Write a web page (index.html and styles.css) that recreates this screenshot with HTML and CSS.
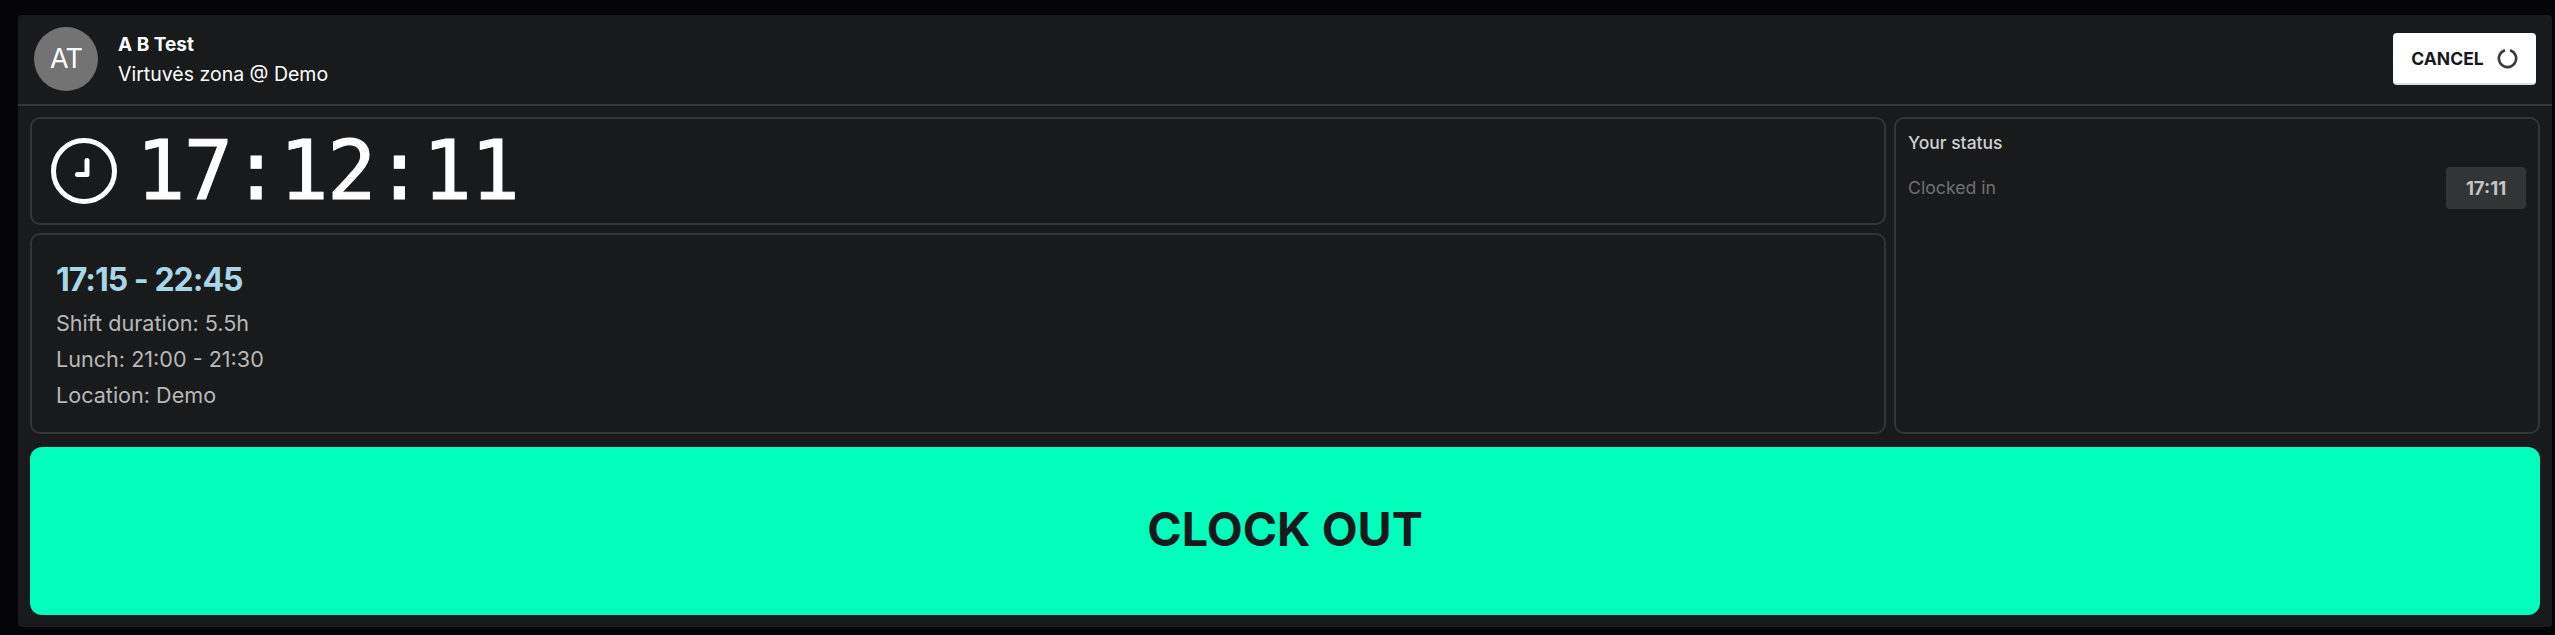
FILE: index.html
```html
<!DOCTYPE html>
<html lang="en">
<head>
  <meta charset="UTF-8">
  <title>Clock out</title>
  <meta name="viewport" content="width=device-width, initial-scale=1.0">
  <link rel="stylesheet" href="styles.css">
</head>
<body>
  <div class="panel">
    <header class="top">
      <div class="avatar">AT</div>
      <div class="who">
        <strong>A B Test</strong>
        <span>Virtuvės zona @ Demo</span>
      </div>
      <button class="cancel" type="button">
        CANCEL
        <svg class="spinner" viewBox="0 0 20 20" width="21" height="21">
          <path d="M12.4 2.1A8.2 8.2 0 1 1 7.6 2.1" fill="none" stroke="#3a3b3d" stroke-width="2.6"/>
        </svg>
      </button>
    </header>
    <div class="content">
      <div class="grid">
        <section class="card clock">
          <svg class="clock-icon" viewBox="0 0 66 66" width="66" height="66">
            <circle cx="33" cy="33" r="30.5" fill="none" stroke="#fff" stroke-width="5"/>
            <path d="M36 22.5V36.5H26.5" fill="none" stroke="#fff" stroke-width="5" stroke-linecap="round" stroke-linejoin="round"/>
          </svg>
          <div class="time">17:12:11</div>
        </section>
        <aside class="card status">
          <h3>Your status</h3>
          <div class="status-row">
            <span class="status-label">Clocked in</span>
            <b class="badge">17:11</b>
          </div>
        </aside>
        <section class="card shift">
          <h2>17:15 - 22:45</h2>
          <p>Shift duration: 5.5h</p>
          <p>Lunch: 21:00 - 21:30</p>
          <p>Location: Demo</p>
        </section>
      </div>
      <button class="clock-out" type="button">CLOCK OUT</button>
    </div>
  </div>
</body>
</html>
```

FILE: styles.css
```css
* { box-sizing: border-box; }
body { margin: 0; height: 635px; overflow: hidden; background: #050509; font-family: Inter, "Liberation Sans", sans-serif; color: #fff; }
.panel { margin: 15px 3px 0 18px; height: 612px; background: #191a1c; border-radius: 4px; }

.top { height: 91px; display: flex; align-items: center; padding: 0 16px 2px 16px; border-bottom: 2px solid #333436; }
.avatar { width: 64px; height: 64px; border-radius: 50%; background: #737373; display: flex; align-items: center; justify-content: center; font-size: 27px; letter-spacing: -1px; }
.who { margin-left: 20px; padding-top: 1px; display: flex; flex-direction: column; gap: 7px; font-size: 19.5px; line-height: 22px; }
.who strong { font-size: 19px; font-weight: 700; }
.cancel { margin-left: auto; width: 143px; height: 52px; padding-top: 2px; display: flex; align-items: center; justify-content: center; gap: 13px; background: #fff; border: none; border-bottom: 2px solid #ddd; border-radius: 4px; color: #18191c; font: 700 17.5px Inter, sans-serif; }

.content { padding: 11px 12px; }
.grid { display: grid; grid-template-columns: 1856px 646px; grid-template-rows: 108px 201px; gap: 8px; }
.card { border: 2px solid #333436; border-radius: 10px; }
.clock { display: flex; align-items: center; padding-left: 19px; gap: 19px; }
.time { font-family: "DejaVu Sans Mono", monospace; font-size: 82px; line-height: 1; letter-spacing: -1.6px; -webkit-text-stroke: 1px #fff; }
.status { grid-row: 1 / 3; grid-column: 2; padding: 13px 12px 0 12px; }
.status h3 { margin: 0; font-size: 17.5px; line-height: 22px; font-weight: 500; color: #d0d0d0; }
.status-row { margin-top: 13px; display: flex; align-items: center; justify-content: space-between; font-size: 17.7px; color: #6f7072; }
.status-label { padding-bottom: 2px; }
.badge { width: 80px; height: 42px; border-radius: 4px; background: #333436; color: #c4c4c4; display: flex; align-items: center; justify-content: center; font-size: 18.5px; font-weight: 700; }
.shift { padding: 24px 24px 0 24px; }
.shift h2 { margin: 0 0 4px 0; font-size: 32px; line-height: 42px; font-weight: 700; color: #a9d6e5; letter-spacing: -1px; }
.shift p { margin: 0; font-size: 21.6px; line-height: 36px; color: #b8b8b8; }

.clock-out { display: block; width: 100%; height: 168px; margin-top: 13px; padding-bottom: 6px; border: none; border-radius: 12px; background: #00ffbb; color: #18191c; font: 700 46.6px Inter, sans-serif; }
```
